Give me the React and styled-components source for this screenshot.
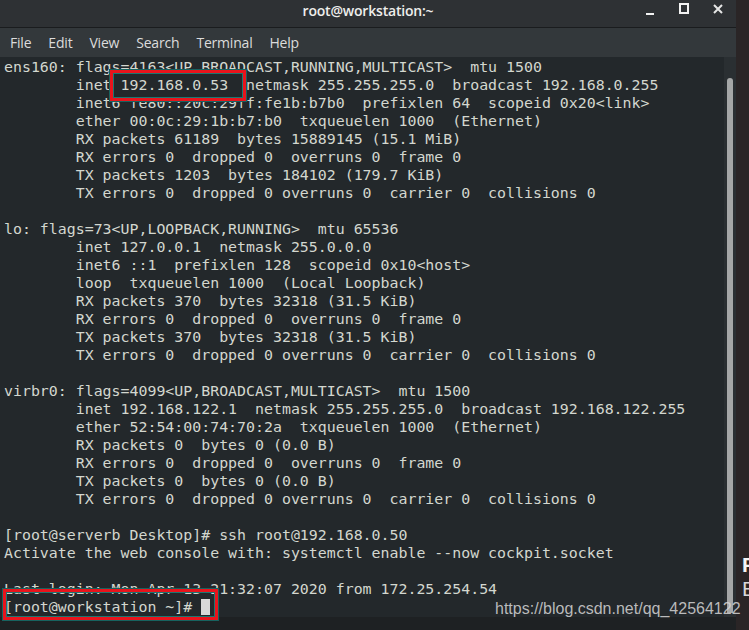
import React from "react";
import styled, { createGlobalStyle } from "styled-components";

const GlobalStyle = createGlobalStyle`
  html, body {
    margin: 0;
    padding: 0;
    background: #1f2224;
    overflow: hidden;
  }
`;

const lines = [
  "ens160: flags=4163<UP,BROADCAST,RUNNING,MULTICAST>  mtu 1500",
  "        inet 192.168.0.53  netmask 255.255.255.0  broadcast 192.168.0.255",
  "        inet6 fe80::20c:29ff:fe1b:b7b0  prefixlen 64  scopeid 0x20<link>",
  "        ether 00:0c:29:1b:b7:b0  txqueuelen 1000  (Ethernet)",
  "        RX packets 61189  bytes 15889145 (15.1 MiB)",
  "        RX errors 0  dropped 0  overruns 0  frame 0",
  "        TX packets 1203  bytes 184102 (179.7 KiB)",
  "        TX errors 0  dropped 0 overruns 0  carrier 0  collisions 0",
  "",
  "lo: flags=73<UP,LOOPBACK,RUNNING>  mtu 65536",
  "        inet 127.0.0.1  netmask 255.0.0.0",
  "        inet6 ::1  prefixlen 128  scopeid 0x10<host>",
  "        loop  txqueuelen 1000  (Local Loopback)",
  "        RX packets 370  bytes 32318 (31.5 KiB)",
  "        RX errors 0  dropped 0  overruns 0  frame 0",
  "        TX packets 370  bytes 32318 (31.5 KiB)",
  "        TX errors 0  dropped 0 overruns 0  carrier 0  collisions 0",
  "",
  "virbr0: flags=4099<UP,BROADCAST,MULTICAST>  mtu 1500",
  "        inet 192.168.122.1  netmask 255.255.255.0  broadcast 192.168.122.255",
  "        ether 52:54:00:74:70:2a  txqueuelen 1000  (Ethernet)",
  "        RX packets 0  bytes 0 (0.0 B)",
  "        RX errors 0  dropped 0  overruns 0  frame 0",
  "        TX packets 0  bytes 0 (0.0 B)",
  "        TX errors 0  dropped 0 overruns 0  carrier 0  collisions 0",
  "",
  "[root@serverb Desktop]# ssh root@192.168.0.50",
  "Activate the web console with: systemctl enable --now cockpit.socket",
  "",
  "Last login: Mon Apr 13 21:32:07 2020 from 172.25.254.54",
];

const menus = ["File", "Edit", "View", "Search", "Terminal", "Help"];

const App = () => {
  return (
    <Screen>
      <GlobalStyle />
      <Window>
        <TitleBar>
          <Title>root@workstation:~</Title>
          <WinButtons>
            <svg width="10" height="12" viewBox="0 0 10 12">
              <rect x="1" y="10" width="8" height="2" fill="#f2f2f2" />
            </svg>
            <svg width="10" height="12" viewBox="0 0 10 12">
              <rect x="1" y="1" width="8" height="9" fill="none" stroke="#f2f2f2" strokeWidth="2" />
              <rect x="1" y="0" width="8" height="2" fill="#f2f2f2" />
            </svg>
            <svg width="10" height="12" viewBox="0 0 10 12">
              <path d="M1 2 L9 10 M9 2 L1 10" stroke="#e6e6e6" strokeWidth="2" />
            </svg>
          </WinButtons>
        </TitleBar>
        <MenuBar>
          {menus.map((m) => (
            <MenuItem key={m}>{m}</MenuItem>
          ))}
        </MenuBar>
        <Body>
          <Output>
            {lines.map((l, i) => (
              <Line key={i}>{l}</Line>
            ))}
            <Line>
              [root@workstation ~]# <Cursor />
            </Line>
          </Output>
          <Track>
            <Thumb />
          </Track>
        </Body>
        <Footer />
      </Window>
      <Desktop>
        <DeskGlyph $bold>F</DeskGlyph>
        <DeskGlyph>E</DeskGlyph>
      </Desktop>

      <Mark $left={110} $top={70} $w={136} $h={31} />
      <Mark $left={3} $top={589} $w={215} $h={31} />
      <Watermark>https://blog.csdn.net/qq_42564122</Watermark>
    </Screen>
  );
};

export default App;

const Screen = styled.div`
  position: relative;
  width: 749px;
  height: 630px;
  display: flex;
  overflow: hidden;
`;

const Window = styled.div`
  width: 736px;
  height: 630px;
  display: flex;
  flex-direction: column;
  background: #23282b;
`;

const TitleBar = styled.div`
  height: 28px;
  box-sizing: border-box;
  border-bottom: 1px solid #1a1c1e;
  background: #2e3134;
  position: relative;
  display: flex;
  justify-content: center;
  align-items: flex-start;
`;

const Title = styled.div`
  font-family: "Open Sans", "DejaVu Sans", sans-serif;
  font-weight: 600;
  font-size: 14px;
  line-height: 22px;
  color: #eeeeec;
  letter-spacing: -0.2px;
`;

const WinButtons = styled.div`
  position: absolute;
  right: 13px;
  top: 3px;
  display: flex;
  gap: 24px;
`;

const MenuBar = styled.div`
  height: 29px;
  background: #33383b;
  display: flex;
  align-items: center;
  padding-left: 10px;
  gap: 17px;
`;

const MenuItem = styled.span`
  font-family: "Open Sans", "DejaVu Sans", sans-serif;
  font-size: 14px;
  color: #dcdcdc;
  letter-spacing: -0.2px;
`;

const Body = styled.div`
  height: 560px;
  display: flex;
  background: #23282b;
`;

const Output = styled.pre`
  flex: 1;
  margin: 0;
  padding: 1px 0 0 4px;
  font-family: "DejaVu Sans Mono", monospace;
  font-size: 14.9px;
  line-height: 18px;
  color: #d3d7cf;
  overflow: hidden;
`;

const Line = styled.div`
  height: 18px;
  white-space: pre;
`;

const Cursor = styled.span`
  display: inline-block;
  width: 9px;
  height: 16px;
  background: #d8d8d8;
  vertical-align: -3px;
`;

const Track = styled.div`
  width: 12px;
  background: #2a2f32;
  padding: 21px 3px 4px 3px;
  box-sizing: border-box;
`;

const Thumb = styled.div`
  width: 6px;
  height: 100%;
  background: #a5a7a7;
  border-radius: 3px 3px 0 0;
`;

const Footer = styled.div`
  flex: 1;
  background: #1e2123;
`;

const Desktop = styled.div`
  width: 13px;
  background: #2a2526;
  display: flex;
  flex-direction: column;
  padding: 553px 0 0 6px;
  box-sizing: border-box;
  overflow: hidden;
`;

const DeskGlyph = styled.span`
  font-family: "Liberation Sans", Arial, sans-serif;
  font-weight: ${(p) => (p.$bold ? 700 : 400)};
  font-size: 21px;
  line-height: 24px;
  color: ${(p) => (p.$bold ? "#f4f4f4" : "#d8d8d8")};
`;

const Mark = styled.div`
  position: absolute;
  left: ${(p) => p.$left}px;
  top: ${(p) => p.$top}px;
  width: ${(p) => p.$w}px;
  height: ${(p) => p.$h}px;
  box-sizing: border-box;
  border: 3px solid #e8141c;
  box-shadow: 0 0 0 1px #17625f, inset 0 0 0 1px #1b7772;
`;

const Watermark = styled.div`
  position: absolute;
  left: 495px;
  top: 600px;
  font-family: "Liberation Sans", Arial, sans-serif;
  font-size: 16px;
  line-height: 18px;
  color: rgba(215, 215, 215, 0.85);
  white-space: nowrap;
`;
